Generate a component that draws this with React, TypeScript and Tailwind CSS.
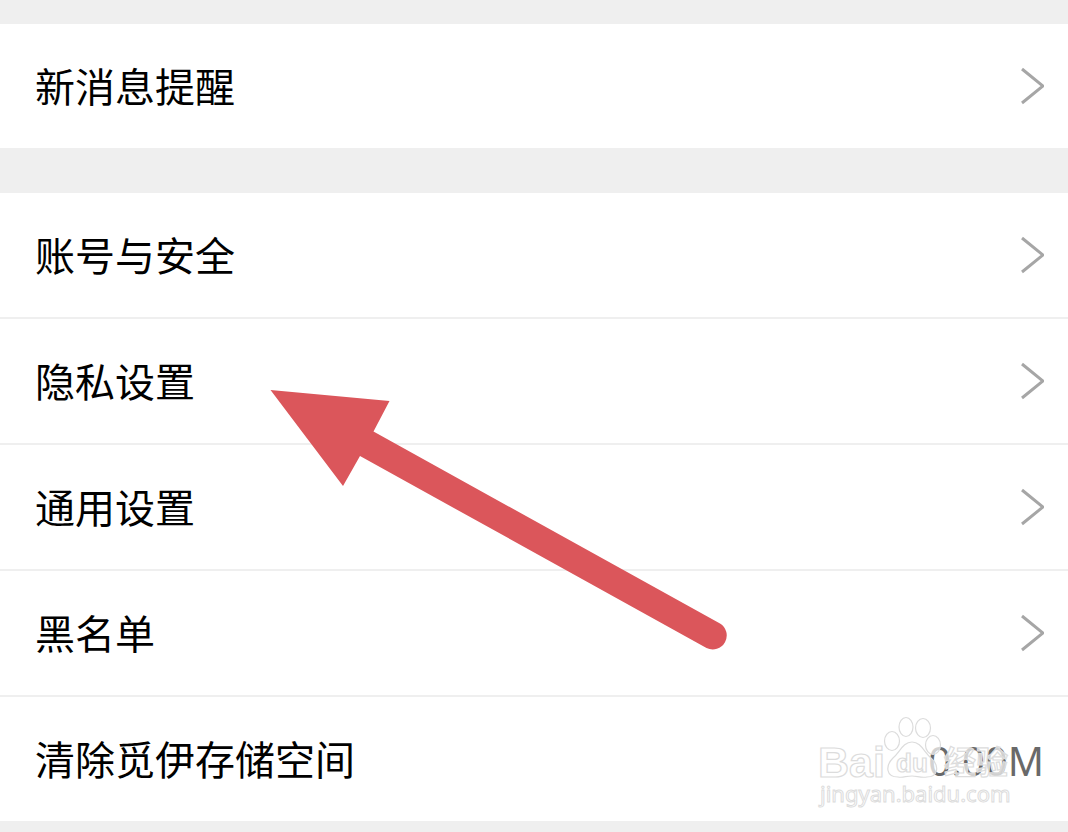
type Row = { label: string; value?: string };

const groups: Row[][] = [
  [{ label: '新消息提醒' }],
  [
    { label: '账号与安全' },
    { label: '隐私设置' },
    { label: '通用设置' },
    { label: '黑名单' },
    { label: '清除觅伊存储空间', value: '0.00M' },
  ],
];

function Chevron() {
  return (
    <svg className="h-10 w-6 shrink-0" viewBox="0 0 24 40" fill="none" stroke="#a6a6a6" strokeWidth="3" aria-hidden="true">
      <path d="M2 3 L23 20 L2 37" />
    </svg>
  );
}

function SettingsRow({ label, value }: Row) {
  return (
    <button type="button" className="flex h-31 w-full items-center justify-between bg-white pr-6 pl-[35px] text-left">
      <span className="pt-0.5 text-[40px] leading-12 text-black">{label}</span>
      {value ? <span className="pt-1 text-[40px] leading-12 text-[#696969]">{value}</span> : <Chevron />}
    </button>
  );
}

function PointerArrow() {
  return (
    <svg
      className="pointer-events-none absolute top-[386px] left-[266px] h-[268px] w-[466px]"
      viewBox="266 386 466 268"
      fill="#db565b"
      aria-hidden="true"
    >
      <path d="M270.5 390 L389.5 401 L373.5 431.5 L720 623.5 A14 14 0 0 1 706.5 648 L360 456 L343 486 Z" />
    </svg>
  );
}

function Watermark() {
  return (
    <svg
      className="pointer-events-none absolute right-[46px] bottom-[7px] h-[100px] w-[208px]"
      viewBox="0 0 208 100"
      fill="#ffffff"
      fillOpacity="0.7"
      stroke="#dcdcdc"
      strokeWidth="1.2"
      fontFamily='"Liberation Sans", "Noto Sans CJK SC", sans-serif'
    >
      <text x="4" y="63" fontSize="43" fontWeight="700">Bai</text>
      <ellipse cx="78" cy="27" rx="7.5" ry="9.5" />
      <ellipse cx="92" cy="13" rx="7" ry="9.5" />
      <ellipse cx="109" cy="14" rx="7.5" ry="9.5" />
      <ellipse cx="119" cy="31" rx="7.5" ry="9.5" />
      <path d="M98 28 C107 28 110 38 117 44 C126 52 124 63 113 63 C107 64 103 62 98 62 C92 62 89 64 84 63 C72 63 71 52 79 44 C86 38 89 28 98 28 Z" />
      <text x="82" y="58" fontSize="26" fontWeight="700">du</text>
      <text x="130" y="60" fontSize="32" fontWeight="700">经验</text>
      <text x="6" y="88" fontSize="22" fontFamily='"Noto Sans", sans-serif' strokeWidth="1">jingyan.baidu.com</text>
    </svg>
  );
}

export default function App() {
  return (
    <main className='relative min-h-screen overflow-hidden bg-[#efefef] pt-6 font-["Noto_Sans","Noto_Sans_CJK_SC",sans-serif]'>
      <div className="relative flex flex-col gap-[45px]">
        {groups.map((rows) => (
          <section key={rows[0].label} className="flex flex-col gap-0.5">
            {rows.map((r) => (
              <SettingsRow key={r.label} {...r} />
            ))}
          </section>
        ))}
        <Watermark />
      </div>
      <PointerArrow />
    </main>
  );
}
